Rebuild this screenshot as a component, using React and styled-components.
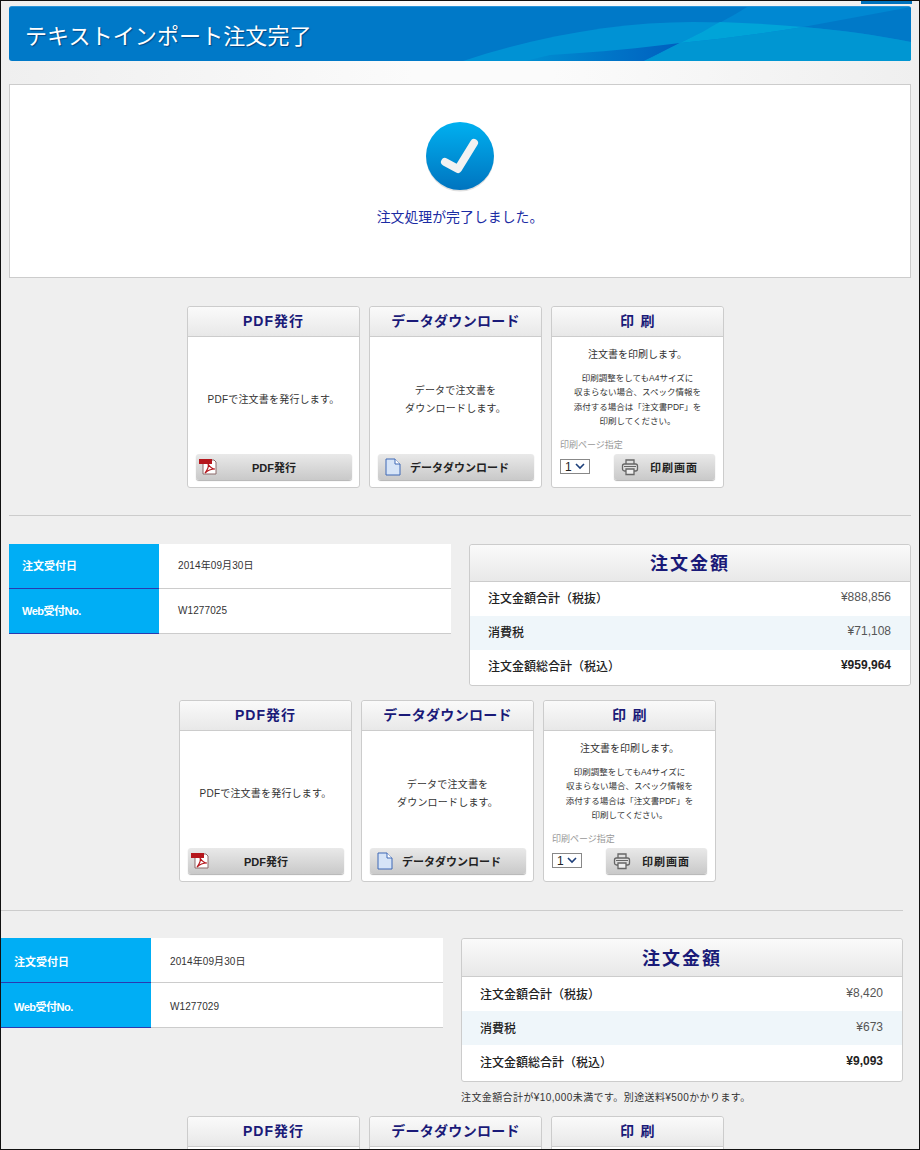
import React from "react";
import styled, { createGlobalStyle } from "styled-components";

const GlobalStyle = createGlobalStyle`
  html, body {
    margin: 0;
    padding: 0;
    background: #efefef;
  }
  * {
    box-sizing: border-box;
  }
`;

const Frame = styled.div`
  width: 920px;
  height: 1150px;
  overflow: hidden;
  background: #efefef;
  border: 1px solid #111;
  font-family: "Liberation Sans", "Noto Sans CJK JP", sans-serif;
  color: #333;
`;

const TopArea = styled.div`
  height: 83px;
  padding: 5px 8px 0;
  background: linear-gradient(90deg, #efefef 0%, #fbfbfb 45%, #fbfbfb 60%, #efefef 100%);
  position: relative;
`;

const TopTab = styled.div`
  position: absolute;
  top: 0;
  right: 7px;
  width: 51px;
  height: 3px;
  background: #0072bc;
`;

const TitleBar = styled.header`
  position: relative;
  height: 55px;
  width: 902px;
  border-radius: 3px;
  overflow: hidden;
  background: #0079c8;
  border-top: 1px solid #2b93d6;
  display: flex;
  align-items: center;
  padding: 0 0 0 16px;
`;

const Wave = styled.svg`
  position: absolute;
  right: 0;
  top: 0;
  width: 460px;
  height: 55px;
`;

const Title = styled.h1`
  position: relative;
  margin: 0;
  color: #fff;
  font-size: 22px;
  font-weight: 400;
  letter-spacing: 0.1px;
  text-shadow: 1px 1px 1px rgba(0, 40, 90, 0.6);
`;

const DonePanel = styled.section`
  margin-left: 8px;
  width: 902px;
  height: 194px;
  background: #fff;
  border: 1px solid #ccc;
  padding-top: 37px;
  display: flex;
  flex-direction: column;
  align-items: center;
`;

const DoneMessage = styled.p`
  margin: 15px 0 0;
  font-size: 13.9px;
  line-height: 20px;
  color: #1b2ca3;
`;

const Group = styled.div`
  width: 902px;
  margin-left: ${(p) => (p.$shift ? 0 : 8)}px;
`;

const CardRow = styled.div`
  display: flex;
  gap: 9px;
  margin-top: ${(p) => p.$top}px;
  margin-left: 178px;
`;

const Card = styled.div`
  width: 173px;
  height: 182px;
  flex: none;
  background: #fff;
  border: 1px solid #ccc;
  border-radius: 3px;
  display: flex;
  flex-direction: column;
`;

const CardHead = styled.h2`
  margin: 0;
  height: 30px;
  flex: none;
  border-bottom: 1px solid #ccc;
  border-radius: 3px 3px 0 0;
  background: linear-gradient(#fafafa, #e8e8e8);
  color: #1a1a78;
  font-size: 14px;
  font-weight: 700;
  letter-spacing: ${(p) => (p.$wide ? 1 : 0.3)}px;
  line-height: 28px;
  text-align: center;
  word-spacing: 2px;
`;

const CardBody = styled.div`
  flex: 1;
  display: flex;
  flex-direction: column;
  padding: 0 8px 7px;
`;

const CardText = styled.div`
  flex: 1;
  display: flex;
  align-items: center;
  justify-content: center;
  padding-top: 9px;
  text-align: center;
  font-size: 10px;
  letter-spacing: 0.2px;
  line-height: 18px;
  color: #333;
`;

const PrintLead = styled.p`
  margin: 10px 0 0;
  text-align: center;
  font-size: 10px;
  line-height: 15px;
`;

const PrintNote = styled.p`
  margin: 9px 0 0;
  text-align: center;
  font-size: 8.5px;
  line-height: 14.4px;
`;

const PageLabel = styled.div`
  margin-top: auto;
  font-size: 9px;
  line-height: 13px;
  color: #999;
`;

const PrintControls = styled.div`
  display: flex;
  align-items: flex-start;
  justify-content: space-between;
  margin-top: 2px;
`;

const SelectBox = styled.div`
  position: relative;
  width: 30px;
  height: 15px;
  margin-top: 5px;
  svg {
    position: absolute;
    right: 5px;
    top: 4px;
    pointer-events: none;
  }
`;

const PageSelect = styled.select`
  appearance: none;
  width: 100%;
  height: 100%;
  display: block;
  border: 1px solid #888;
  border-radius: 0;
  background: #fff;
  padding: 0 0 0 4px;
  font-family: "Liberation Sans", sans-serif;
  font-size: 12px;
  color: #222;
`;

const ActionButton = styled.button`
  position: relative;
  width: ${(p) => p.$width}px;
  height: 26px;
  flex: none;
  border: 0;
  border-radius: 3px;
  padding: 0 0 0 ${(p) => p.$indent || 0}px;
  background: linear-gradient(#e9e9e9, #c9c9c9);
  box-shadow: 0 1px 1px rgba(0, 0, 0, 0.3);
  font-family: inherit;
  font-size: 11px;
  font-weight: 700;
  letter-spacing: ${(p) => p.$spacing || 0}px;
  color: #222;
  text-align: center;
  svg {
    position: absolute;
    left: ${(p) => p.$iconLeft}px;
    top: 4px;
  }
`;

const Divider = styled.hr`
  margin: ${(p) => p.$top}px 0 ${(p) => p.$bottom}px;
  height: 0;
  border: 0;
  border-top: 1px solid #ccc;
`;

const OrderRow = styled.div`
  display: flex;
  justify-content: space-between;
  align-items: flex-start;
`;

const InfoTable = styled.dl`
  margin: 0;
  width: 442px;
`;

const InfoRow = styled.div`
  display: flex;
  height: 45px;
  background: #fff;
`;

const InfoLabel = styled.dt`
  width: 150px;
  background: #00aef5;
  border-bottom: 1px solid #2a3ab0;
  color: #fff;
  font-size: 11px;
  font-weight: 700;
  letter-spacing: ${(p) => (p.$tight ? -0.5 : 0)}px;
  line-height: ${(p) => (p.$low ? 48 : 44)}px;
  padding-left: 13px;
`;

const InfoValue = styled.dd`
  margin: 0;
  flex: 1;
  border-bottom: 1px solid #ccc;
  font-size: 10px;
  line-height: ${(p) => (p.$low ? 48 : 44)}px;
  padding-left: 19px;
  letter-spacing: 0.1px;
  color: #333;
`;

const AmountCard = styled.div`
  width: 442px;
  background: #fff;
  border: 1px solid #ccc;
  border-radius: 3px;
  padding-bottom: ${(p) => (p.$tall ? 2 : 1)}px;
`;

const AmountHead = styled.h2`
  margin: 0;
  height: ${(p) => (p.$tall ? 38 : 37)}px;
  border-bottom: 1px solid #ccc;
  border-radius: 3px 3px 0 0;
  background: linear-gradient(#fafafa, #e8e8e8);
  color: #1a1a78;
  font-size: 18px;
  font-weight: 700;
  line-height: ${(p) => (p.$tall ? 40 : 38)}px;
  letter-spacing: 2px;
  text-align: center;
`;

const AmountRow = styled.div`
  display: flex;
  justify-content: space-between;
  align-items: center;
  height: 34px;
  padding: 0 19px ${(p) => (p.$tall ? 2 : 4)}px 18px;
  background: ${(p) => (p.$tinted ? "#eff6fa" : "#fff")};
`;

const AmountLabel = styled.span`
  font-size: 12px;
  font-weight: 500;
  color: #222;
`;

const AmountValue = styled.span`
  font-size: 12px;
  font-weight: ${(p) => (p.$strong ? 700 : 400)};
  color: ${(p) => (p.$strong ? "#222" : "#555")};
`;

const ShippingNote = styled.p`
  margin: 8px 0 0 460px;
  font-size: 10px;
  letter-spacing: 0.4px;
  line-height: 15px;
  color: #333;
`;

const CheckIcon = () => (
  <svg width="68" height="70" viewBox="0 0 68 70">
    <defs>
      <linearGradient id="checkFill" x1="0" y1="0" x2="0" y2="1">
        <stop offset="0" stopColor="#00b0f0" />
        <stop offset="1" stopColor="#0074bf" />
      </linearGradient>
    </defs>
    <circle cx="34" cy="35.5" r="34" fill="#000" opacity="0.12" />
    <circle cx="34" cy="34" r="34" fill="url(#checkFill)" />
    <path d="M19 40 L32 47 L48 21" fill="none" stroke="#f2f2f2" strokeWidth="8" strokeLinejoin="round" strokeLinecap="round" />
  </svg>
);

const PdfIcon = () => (
  <svg width="18" height="17" viewBox="0 0 18 17">
    <path d="M4 2 H15 L17 4 V16 H4 Z" fill="#fff" stroke="#8c6a6a" />
    <rect x="0" y="1" width="13" height="5" fill="#b5161c" />
    <path d="M6 15 C9 11 10 8 9 6 C11 9 13 11 16 11 C12 11 9 12 6 15 Z" fill="none" stroke="#b5161c" strokeWidth="1.2" />
  </svg>
);

const DocIcon = () => (
  <svg width="16" height="18" viewBox="0 0 16 18">
    <path d="M1 1 H10 L15 6 V17 H1 Z" fill="#d6e4f7" stroke="#3f69b5" />
    <path d="M10 1 V6 H15" fill="#fff" stroke="#3f69b5" />
  </svg>
);

const PrinterIcon = () => (
  <svg width="18" height="18" viewBox="0 0 18 18" fill="none" stroke="#666" strokeWidth="1.3">
    <path d="M5 6 V2 H13 V6" />
    <rect x="1.5" y="6" width="15" height="7" rx="2" fill="#ddd" />
    <path d="M5 11 H13 V16.5 H5 Z" fill="#eee" />
    <path d="M3 8.5 H15" strokeWidth="1" />
  </svg>
);

const Actions = ({ top }) => (
  <CardRow $top={top}>
    <Card>
      <CardHead $wide>PDF発行</CardHead>
      <CardBody>
        <CardText>PDFで注文書を発行します。</CardText>
        <ActionButton $width={156} $iconLeft={3}>
          <PdfIcon />
          PDF発行
        </ActionButton>
      </CardBody>
    </Card>
    <Card>
      <CardHead>データダウンロード</CardHead>
      <CardBody>
        <CardText>
          データで注文書を
          <br />
          ダウンロードします。
        </CardText>
        <ActionButton $width={156} $iconLeft={7} $indent={7}>
          <DocIcon />
          データダウンロード
        </ActionButton>
      </CardBody>
    </Card>
    <Card>
      <CardHead>印 刷</CardHead>
      <CardBody>
        <PrintLead>注文書を印刷します。</PrintLead>
        <PrintNote>
          印刷調整をしてもA4サイズに
          <br />
          収まらない場合、スペック情報を
          <br />
          添付する場合は「注文書PDF」を
          <br />
          印刷してください。
        </PrintNote>
        <PageLabel>印刷ページ指定</PageLabel>
        <PrintControls>
          <SelectBox>
            <PageSelect defaultValue="1">
              <option value="1">1</option>
            </PageSelect>
            <svg width="10" height="7" viewBox="0 0 10 7" fill="none" stroke="#1d3f7a" strokeWidth="1.6">
              <path d="M1 1 L5 5 L9 1" />
            </svg>
          </SelectBox>
          <ActionButton $width={101} $iconLeft={7} $indent={19} $spacing={1}>
            <PrinterIcon />
            印刷画面
          </ActionButton>
        </PrintControls>
      </CardBody>
    </Card>
  </CardRow>
);

const Order = ({ date, no, rows, tall, note }) => (
  <>
    <OrderRow>
      <InfoTable>
        <InfoRow>
          <InfoLabel $low={tall}>注文受付日</InfoLabel>
          <InfoValue $low={tall}>{date}</InfoValue>
        </InfoRow>
        <InfoRow>
          <InfoLabel $tight $low={tall}>Web受付No.</InfoLabel>
          <InfoValue $low={tall}>{no}</InfoValue>
        </InfoRow>
      </InfoTable>
      <AmountCard $tall={tall}>
        <AmountHead $tall={tall}>注文金額</AmountHead>
        {rows.map((row, i) => (
          <AmountRow key={row.label} $tinted={i === 1} $tall={tall}>
            <AmountLabel>{row.label}</AmountLabel>
            <AmountValue $strong={i === 2}>{row.value}</AmountValue>
          </AmountRow>
        ))}
      </AmountCard>
    </OrderRow>
    {note && <ShippingNote>{note}</ShippingNote>}
  </>
);

const amounts = (a, b, c) => [
  { label: "注文金額合計（税抜）", value: a },
  { label: "消費税", value: b },
  { label: "注文金額総合計（税込）", value: c },
];

export default function App() {
  return (
    <Frame>
      <GlobalStyle />
      <TopArea>
        <TopTab />
        <TitleBar>
          <Wave viewBox="0 0 460 55" preserveAspectRatio="none">
            <defs>
              <linearGradient id="waveShade" x1="0" y1="0" x2="1" y2="0">
                <stop offset="0" stopColor="#0090d2" />
                <stop offset="1" stopColor="#005fbf" />
              </linearGradient>
            </defs>
            <path d="M9 55 C90 28 170 15 242 15 C320 15 400 23 460 35 V55 Z" fill="#0092d4" />
            <path d="M99 48 C150 45 190 41 229 36 L191 55 H70 Z" fill="url(#waveShade)" />
            <path d="M296 0 C280 10 255 24 229 36 C215 43 205 49 191 55 H460 V0 Z" fill="#0088d2" />
            <path d="M229 36 C245 29 258 21 269 15 C300 16 330 18 352 20 C310 27 270 32 229 36 Z" fill="#00a4d8" />
            <path d="M352 20 L460 0 V35 C425 28 390 23 352 20 Z" fill="#0079c8" />
            <path d="M191 55 C205 49 215 43 229 36 C270 32 310 27 352 20 C390 23 425 28 460 35 V55 Z" fill="#0096d2" />
          </Wave>
          <Title>テキストインポート注文完了</Title>
        </TitleBar>
      </TopArea>

      <DonePanel>
        <CheckIcon />
        <DoneMessage>注文処理が完了しました。</DoneMessage>
      </DonePanel>

      <Group>
        <Actions top={28} />
        <Divider $top={27} $bottom={28} />
        <Order date="2014年09月30日" no="W1277025" rows={amounts("¥888,856", "¥71,108", "¥959,964")} />
      </Group>

      <Group $shift>
        <Actions top={14} />
        <Divider $top={28} $bottom={27} />
        <Order date="2014年09月30日" no="W1277029" rows={amounts("¥8,420", "¥673", "¥9,093")} tall note="注文金額合計が¥10,000未満です。別途送料¥500かかります。" />
      </Group>

      <Group>
        <Actions top={11} />
      </Group>
    </Frame>
  );
}
